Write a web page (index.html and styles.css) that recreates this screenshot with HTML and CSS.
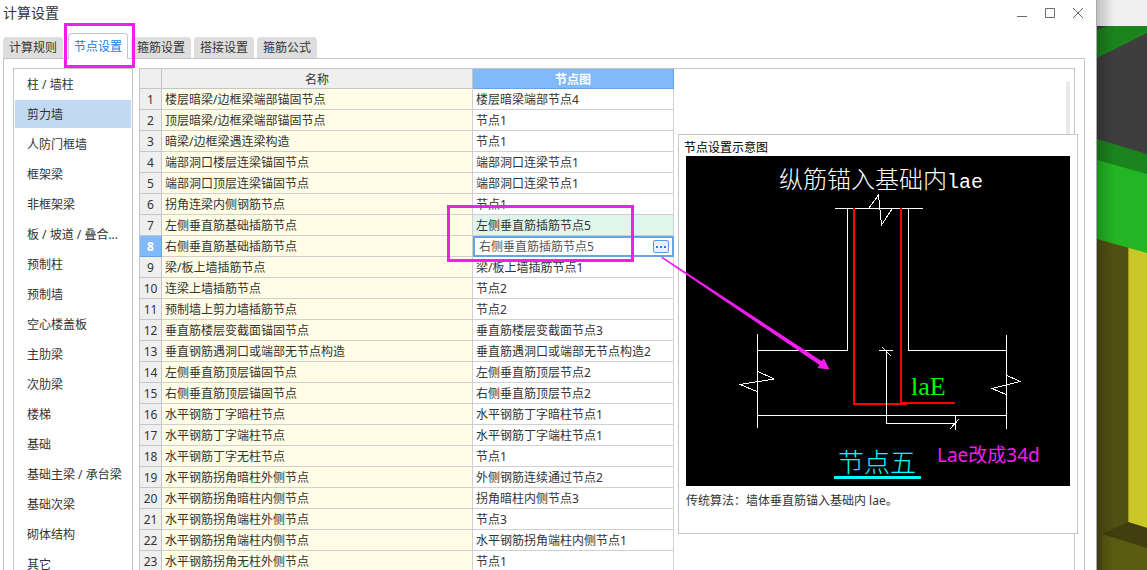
FILE: index.html
```html
<!DOCTYPE html>
<html lang="zh-CN">
<head>
<meta charset="utf-8">
<title>计算设置</title>
<link rel="stylesheet" href="styles.css">
</head>
<body>
<div class="desktop">
<main class="dialog">
  <header class="titlebar">
    <h1 class="title">计算设置</h1>
    <div class="window-buttons">
      <button class="window-button" aria-label="最小化"><svg viewBox="0 0 12 12"><path d="M1 9.500h10"/></svg></button>
      <button class="window-button" aria-label="最大化"><svg viewBox="0 0 12 12"><path d="M1.500 1.500h9v9h-9z"/></svg></button>
      <button class="window-button" aria-label="关闭"><svg viewBox="0 0 12 12"><path d="M1 1l10 10M11 1L1 11"/></svg></button>
    </div>
  </header>
  <nav class="tabs">
    <button class="tab">计算规则</button>
    <button class="tab tab-active">节点设置</button>
    <button class="tab">箍筋设置</button>
    <button class="tab">搭接设置</button>
    <button class="tab">箍筋公式</button>
  </nav>
  <div class="content">
    <nav class="sidebar">
      <button class="item">柱 / 墙柱</button>
      <button class="item item-active">剪力墙</button>
      <button class="item">人防门框墙</button>
      <button class="item">框架梁</button>
      <button class="item">非框架梁</button>
      <button class="item">板 / 坡道 / 叠合...</button>
      <button class="item">预制柱</button>
      <button class="item">预制墙</button>
      <button class="item">空心楼盖板</button>
      <button class="item">主肋梁</button>
      <button class="item">次肋梁</button>
      <button class="item">楼梯</button>
      <button class="item">基础</button>
      <button class="item">基础主梁 / 承台梁</button>
      <button class="item">基础次梁</button>
      <button class="item">砌体结构</button>
      <button class="item">其它</button>
    </nav>
    <section class="grid-panel">
      <table class="grid">
        <colgroup><col class="col-number"><col class="col-name"><col class="col-node"></colgroup>
        <thead><tr><th></th><th>名称</th><th class="selected">节点图</th></tr></thead>
        <tbody>
          <tr><th>1</th><td>楼层暗梁/边框梁端部锚固节点</td><td>楼层暗梁端部节点4</td></tr>
          <tr><th>2</th><td>顶层暗梁/边框梁端部锚固节点</td><td>节点1</td></tr>
          <tr><th>3</th><td>暗梁/边框梁遇连梁构造</td><td>节点1</td></tr>
          <tr><th>4</th><td>端部洞口楼层连梁锚固节点</td><td>端部洞口连梁节点1</td></tr>
          <tr><th>5</th><td>端部洞口顶层连梁锚固节点</td><td>端部洞口连梁节点1</td></tr>
          <tr><th>6</th><td>拐角连梁内侧钢筋节点</td><td>节点1</td></tr>
          <tr><th>7</th><td>左侧垂直筋基础插筋节点</td><td class="changed">左侧垂直筋插筋节点5</td></tr>
          <tr><th class="selected">8</th><td>右侧垂直筋基础插筋节点</td><td class="editing"><div class="editor"><input class="editor-input" aria-label="节点图" value="右侧垂直筋插筋节点5"><button class="more" aria-label="选择节点"><svg viewBox="0 0 12 10"><path d="M1 4h2v2H1zM5 4h2v2H5zM9 4h2v2H9z"/></svg></button></div></td></tr>
          <tr><th>9</th><td>梁/板上墙插筋节点</td><td>梁/板上墙插筋节点1</td></tr>
          <tr><th>10</th><td>连梁上墙插筋节点</td><td>节点2</td></tr>
          <tr><th>11</th><td>预制墙上剪力墙插筋节点</td><td>节点2</td></tr>
          <tr><th>12</th><td>垂直筋楼层变截面锚固节点</td><td>垂直筋楼层变截面节点3</td></tr>
          <tr><th>13</th><td>垂直钢筋遇洞口或端部无节点构造</td><td>垂直筋遇洞口或端部无节点构造2</td></tr>
          <tr><th>14</th><td>左侧垂直筋顶层锚固节点</td><td>左侧垂直筋顶层节点2</td></tr>
          <tr><th>15</th><td>右侧垂直筋顶层锚固节点</td><td>右侧垂直筋顶层节点2</td></tr>
          <tr><th>16</th><td>水平钢筋丁字暗柱节点</td><td>水平钢筋丁字暗柱节点1</td></tr>
          <tr><th>17</th><td>水平钢筋丁字端柱节点</td><td>水平钢筋丁字端柱节点1</td></tr>
          <tr><th>18</th><td>水平钢筋丁字无柱节点</td><td>节点1</td></tr>
          <tr><th>19</th><td>水平钢筋拐角暗柱外侧节点</td><td>外侧钢筋连续通过节点2</td></tr>
          <tr><th>20</th><td>水平钢筋拐角暗柱内侧节点</td><td>拐角暗柱内侧节点3</td></tr>
          <tr><th>21</th><td>水平钢筋拐角端柱外侧节点</td><td>节点3</td></tr>
          <tr><th>22</th><td>水平钢筋拐角端柱内侧节点</td><td>水平钢筋拐角端柱内侧节点1</td></tr>
          <tr><th>23</th><td>水平钢筋拐角无柱外侧节点</td><td>节点1</td></tr>
        </tbody>
      </table>
      <div class="scrollbar"></div>
    </section>
  </div>
  <aside class="preview">
    <h2 class="preview-title">节点设置示意图</h2>
    <svg class="drawing" viewBox="686 156 384 330" role="img" aria-label="节点五">
      <g class="thin" shape-rendering="crispEdges">
        <path d="M835 208.500H923M847.500 208V350.500H757M908.500 208V350.500H1006M757.500 334V428M1006.500 335V429M757 415.500H1006"/>
        <path d="M869 208L878.500 195L881.500 225L892 209"/>
        <path d="M757 371L774 379L740 384.500L757 391.500"/>
        <path d="M1006 375L1020 381.500L992 388.500L1006 394.500"/>
      </g>
      <path class="rebar" d="M854 208V404H907M901 208V403H955"/>
      <path class="thin" shape-rendering="crispEdges" d="M879 350.500H893M882 347L891 356M886.500 351V423.500H955M955.500 416V430M950 429L959 419"/>
      <text class="cad-title" x="779" y="188">纵筋锚入基础内<tspan class="cad-latin">lae</tspan></text>
      <text class="cad-length" x="911" y="395">laE</text>
      <text class="cad-name" x="838" y="472">节点五</text>
      <path class="underline" d="M834 477.500H921"/>
      <text class="cad-note" x="937" y="462">Lae改成34d</text>
    </svg>
    <p class="caption">传统算法：墙体垂直筋锚入基础内 lae。</p>
  </aside>
  <div class="mark mark-tab"></div>
  <div class="mark mark-cell"></div>
  <svg class="arrow" viewBox="660 255 172 118" aria-hidden="true"><path d="M662 256.500L821.500 361L824 358.500L829.500 369.500L817.500 368L819.500 365L661.500 258Z"/></svg>
</main>
<svg class="scene" viewBox="0 0 50 570" preserveAspectRatio="none" aria-hidden="true">
  <defs><linearGradient id="shade"><stop offset="0" stop-opacity=".2"/><stop offset=".35" stop-opacity="0"/></linearGradient></defs>
  <path fill="#f0f0f0" d="M0 0h50v26H0z"/>
  <path fill="#3e3e3e" d="M0 26h50v130H0z"/>
  <path fill="#1c841c" d="M0 30L10 26H50V33L0 58z"/>
  <path fill="#1c841c" d="M0 139L50 154V175L0 161z"/>
  <path fill="#5b5b12" d="M0 238h50v332H0z"/>
  <path fill="#505013" d="M0 238h33v284L5 534V570H0z"/>
  <path fill="#c9c728" d="M31 246H50V528L31 522z"/>
  <path fill="#a09e20" d="M31 246h1v276h-1z"/>
  <path fill="#403f0d" d="M5 534L31 522L50 528V548z"/>
  <path fill="#24b524" d="M0 160L50 174V253L0 239z"/>
  <path fill="url(#shade)" d="M0 0h50v570H0z"/>
</svg>
</div>
</body>
</html>
```
FILE: styles.css
```css
* { box-sizing: border-box; }
body {
  margin: 0;
  overflow: hidden;
  font: 12px/20px "Noto Sans", "Noto Sans CJK SC", sans-serif;
  color: #333;
}
button, input { font: inherit; color: inherit; border: 0; padding: 0; margin: 0; background: none; border-radius: 0; }
h1, h2, p { margin: 0; font-weight: normal; }

.desktop { display: flex; height: 100vh; overflow: hidden; }
.dialog {
  position: relative;
  flex: 1;
  min-width: 0;
  display: flex;
  flex-direction: column;
  background: #fff;
  border-right: 1px solid #a5a9ad;
}
.scene { width: 50px; height: 100%; flex: none; display: block; }

.titlebar { display: flex; justify-content: space-between; height: 33px; padding: 3px 12px 0 3px; }
.title { font-size: 14px; line-height: 20px; }
.window-buttons { display: flex; gap: 16px; height: 20px; align-items: center; }
.window-button { width: 12px; height: 12px; }
.window-button svg { display: block; width: 12px; height: 12px; fill: none; stroke: #6b6b6b; }

.tabs { display: flex; align-items: flex-end; gap: 3px; height: 25px; padding-left: 3px; }
.tab {
  width: 60px;
  height: 21px;
  line-height: 21px;
  background: #dedede;
  border-radius: 4px 4px 0 0;
  text-align: center;
}
.tab-active {
  position: relative;
  height: 26px;
  margin: 0 0 -1px 2px;
  background: #fff;
  color: #1b7be6;
  border: 1px solid #c3c5c8;
  border-bottom: 0;
}

.content {
  flex: 1;
  min-height: 0;
  display: flex;
  gap: 6px;
  margin: 0 11px 0 3px;
  padding: 9px 9px 0;
  border: 1px solid #c3c5c8;
  border-bottom: 0;
}
.sidebar {
  width: 120px;
  flex: none;
  display: flex;
  flex-direction: column;
  gap: 2px;
  padding: 1px 1px 0;
  border: 1px solid #c3c5c8;
  border-bottom: 0;
  overflow: hidden;
}
.item { flex: none; height: 28px; padding: 2px 0 0 12px; text-align: left; white-space: nowrap; }
.item-active { background: #c2d9f2; }

.grid-panel {
  flex: 1;
  min-width: 0;
  display: flex;
  justify-content: space-between;
  align-items: flex-start;
  padding-right: 4px;
  border: 1px solid #c3c5c8;
  border-bottom: 0;
  overflow: hidden;
}
.grid { table-layout: fixed; width: 534px; border-spacing: 0; }
.col-number { width: 22px; }
.col-name { width: 311px; }
.col-node { width: 201px; }
.grid th, .grid td {
  height: 21px;
  padding: 2px 3px 0;
  line-height: 18px;
  border: solid #d0d0d0;
  border-width: 0 1px 1px 0;
  white-space: nowrap;
}
.grid th { padding: 2px 0 0; background: #efefef; font-weight: normal; text-align: center; border-color: #c3c5c8; }
.grid thead th { height: 20px; line-height: 17px; }
.grid td:nth-child(2) { background: #fffde6; }
.grid .selected {
  background: #80bafa;
  border-color: #65a3e6;
  color: #fff;
  font-weight: bold;
}
.grid .changed { background: #def6eb; }
.grid .editing { padding: 0; border: 0; }
.editor {
  display: flex;
  align-items: center;
  height: 21px;
  padding: 0 3px 0 4px;
  border: 2px solid #67a4e7;
}
.editor-input { flex: 1; min-width: 0; height: 17px; color: #555; }
.more {
  width: 16px;
  height: 13px;
  border: 1px solid #529be8;
  border-radius: 2px;
  background: #edf1f7;
}
.more svg { display: block; width: 12px; height: 10px; margin: 0 auto; fill: #2480e8; }
.scrollbar { width: 4px; height: 400px; margin-top: 12px; border-radius: 2px; background: #e9e9e9; }

.preview {
  position: absolute;
  left: 678px;
  top: 134px;
  width: 400px;
  height: 400px;
  padding: 5px 7px;
  background: #fff;
  border: 1px solid #c3c5c8;
}
.preview-title { margin-left: -2px; font-size: 12px; line-height: 16px; color: #000; }
.drawing { display: block; width: 384px; height: 330px; background: #000; }
.caption { margin-top: 5px; }
.thin { fill: none; stroke: #fff; stroke-width: 1px; }
.rebar { fill: none; stroke: #f00; stroke-width: 2px; }
.cad-title { font: 24px "Noto Sans CJK SC", sans-serif; font-weight: 300; fill: #fff; }
.cad-latin { font: 20px "Liberation Mono", monospace; }
.cad-length { font: 26px "Liberation Serif", serif; fill: #0f0; }
.cad-name { font: 26px "Noto Sans CJK SC", sans-serif; font-weight: 300; fill: #0ff; }
.cad-note { font: 19px "Noto Sans", "Noto Sans CJK SC", sans-serif; fill: #f41df0; }
.underline { stroke: #0ff; stroke-width: 3px; }

.mark { position: absolute; border: 3px solid #f41df0; pointer-events: none; }
.mark-tab { left: 64px; top: 23px; width: 71px; height: 45px; }
.mark-cell { left: 447px; top: 205px; width: 187px; height: 57px; }
.arrow { position: absolute; left: 660px; top: 255px; width: 172px; height: 118px; fill: #f41df0; pointer-events: none; }
```
